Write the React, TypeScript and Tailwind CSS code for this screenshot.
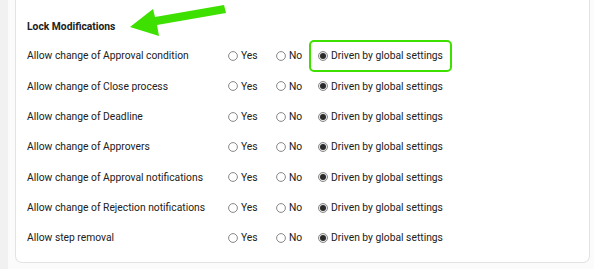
import React from "react";

const rows = [
  "Allow change of Approval condition",
  "Allow change of Close process",
  "Allow change of Deadline",
  "Allow change of Approvers",
  "Allow change of Approval notifications",
  "Allow change of Rejection notifications",
  "Allow step removal",
];

function Radio({ checked }: { checked?: boolean }) {
  return (
    <svg width="10" height="10" viewBox="0 0 10 10" className="shrink-0">
      {checked ? (
        <>
          <circle cx="5" cy="5" r="4.5" fill="#e8e8e8" stroke="#8a8a8a" strokeWidth="1" />
          <circle cx="5" cy="5" r="3" fill="#2b2b2b" />
        </>
      ) : (
        <circle cx="5" cy="5" r="4.4" fill="#fff" stroke="#7a7a7a" strokeWidth="0.9" />
      )}
    </svg>
  );
}

export default function App() {
  return (
    <div
      className="flex w-[594px] h-[269px] bg-white text-[#212121] overflow-hidden"
      style={{ fontFamily: "Roboto, 'Liberation Sans', sans-serif" }}
    >
      <div className="w-[8px] bg-[#f1f1f1] shrink-0" />
      <div className="flex-1 pl-[7px] pr-[4px] bg-[#fbfbfb]">
        <div className="relative h-[263px] bg-white border-l border-r border-b border-[#e3e3e3] rounded-b-[7px] pl-[11px] pt-[20px]">
          <svg
            className="absolute left-[79px] top-0"
            width="140"
            height="40"
            viewBox="95 0 140 40"
          >
            <polygon points="130,27 153,9 155,17 224,5 226,13 157,25 159,36" fill="#3ee000" />
          </svg>
          <div className="text-[10.3px] font-bold leading-[14px] h-[14px]">Lock Modifications</div>
          <div className="pt-[7px]">
            {rows.map((r, i) => (
              <div key={r} className="flex items-center h-[30.33px] text-[10.3px]">
                <div className="w-[201px] shrink-0 whitespace-nowrap">{r}</div>
                <div className="w-[48px] flex items-center gap-[3px]">
                  <Radio />
                  <span>Yes</span>
                </div>
                <div className="w-[42px] flex items-center gap-[3px]">
                  <Radio />
                  <span>No</span>
                </div>
                <div className="relative flex items-center gap-[3px]">
                  {i === 0 && (
                    <div className="absolute left-[-9px] right-[-9px] top-[-8px] bottom-[-8px] border-2 border-[#3ee000] rounded-[5px]" />
                  )}
                  <Radio checked />
                  <span>Driven by global settings</span>
                </div>
              </div>
            ))}
          </div>
        </div>
      </div>
    </div>
  );
}
